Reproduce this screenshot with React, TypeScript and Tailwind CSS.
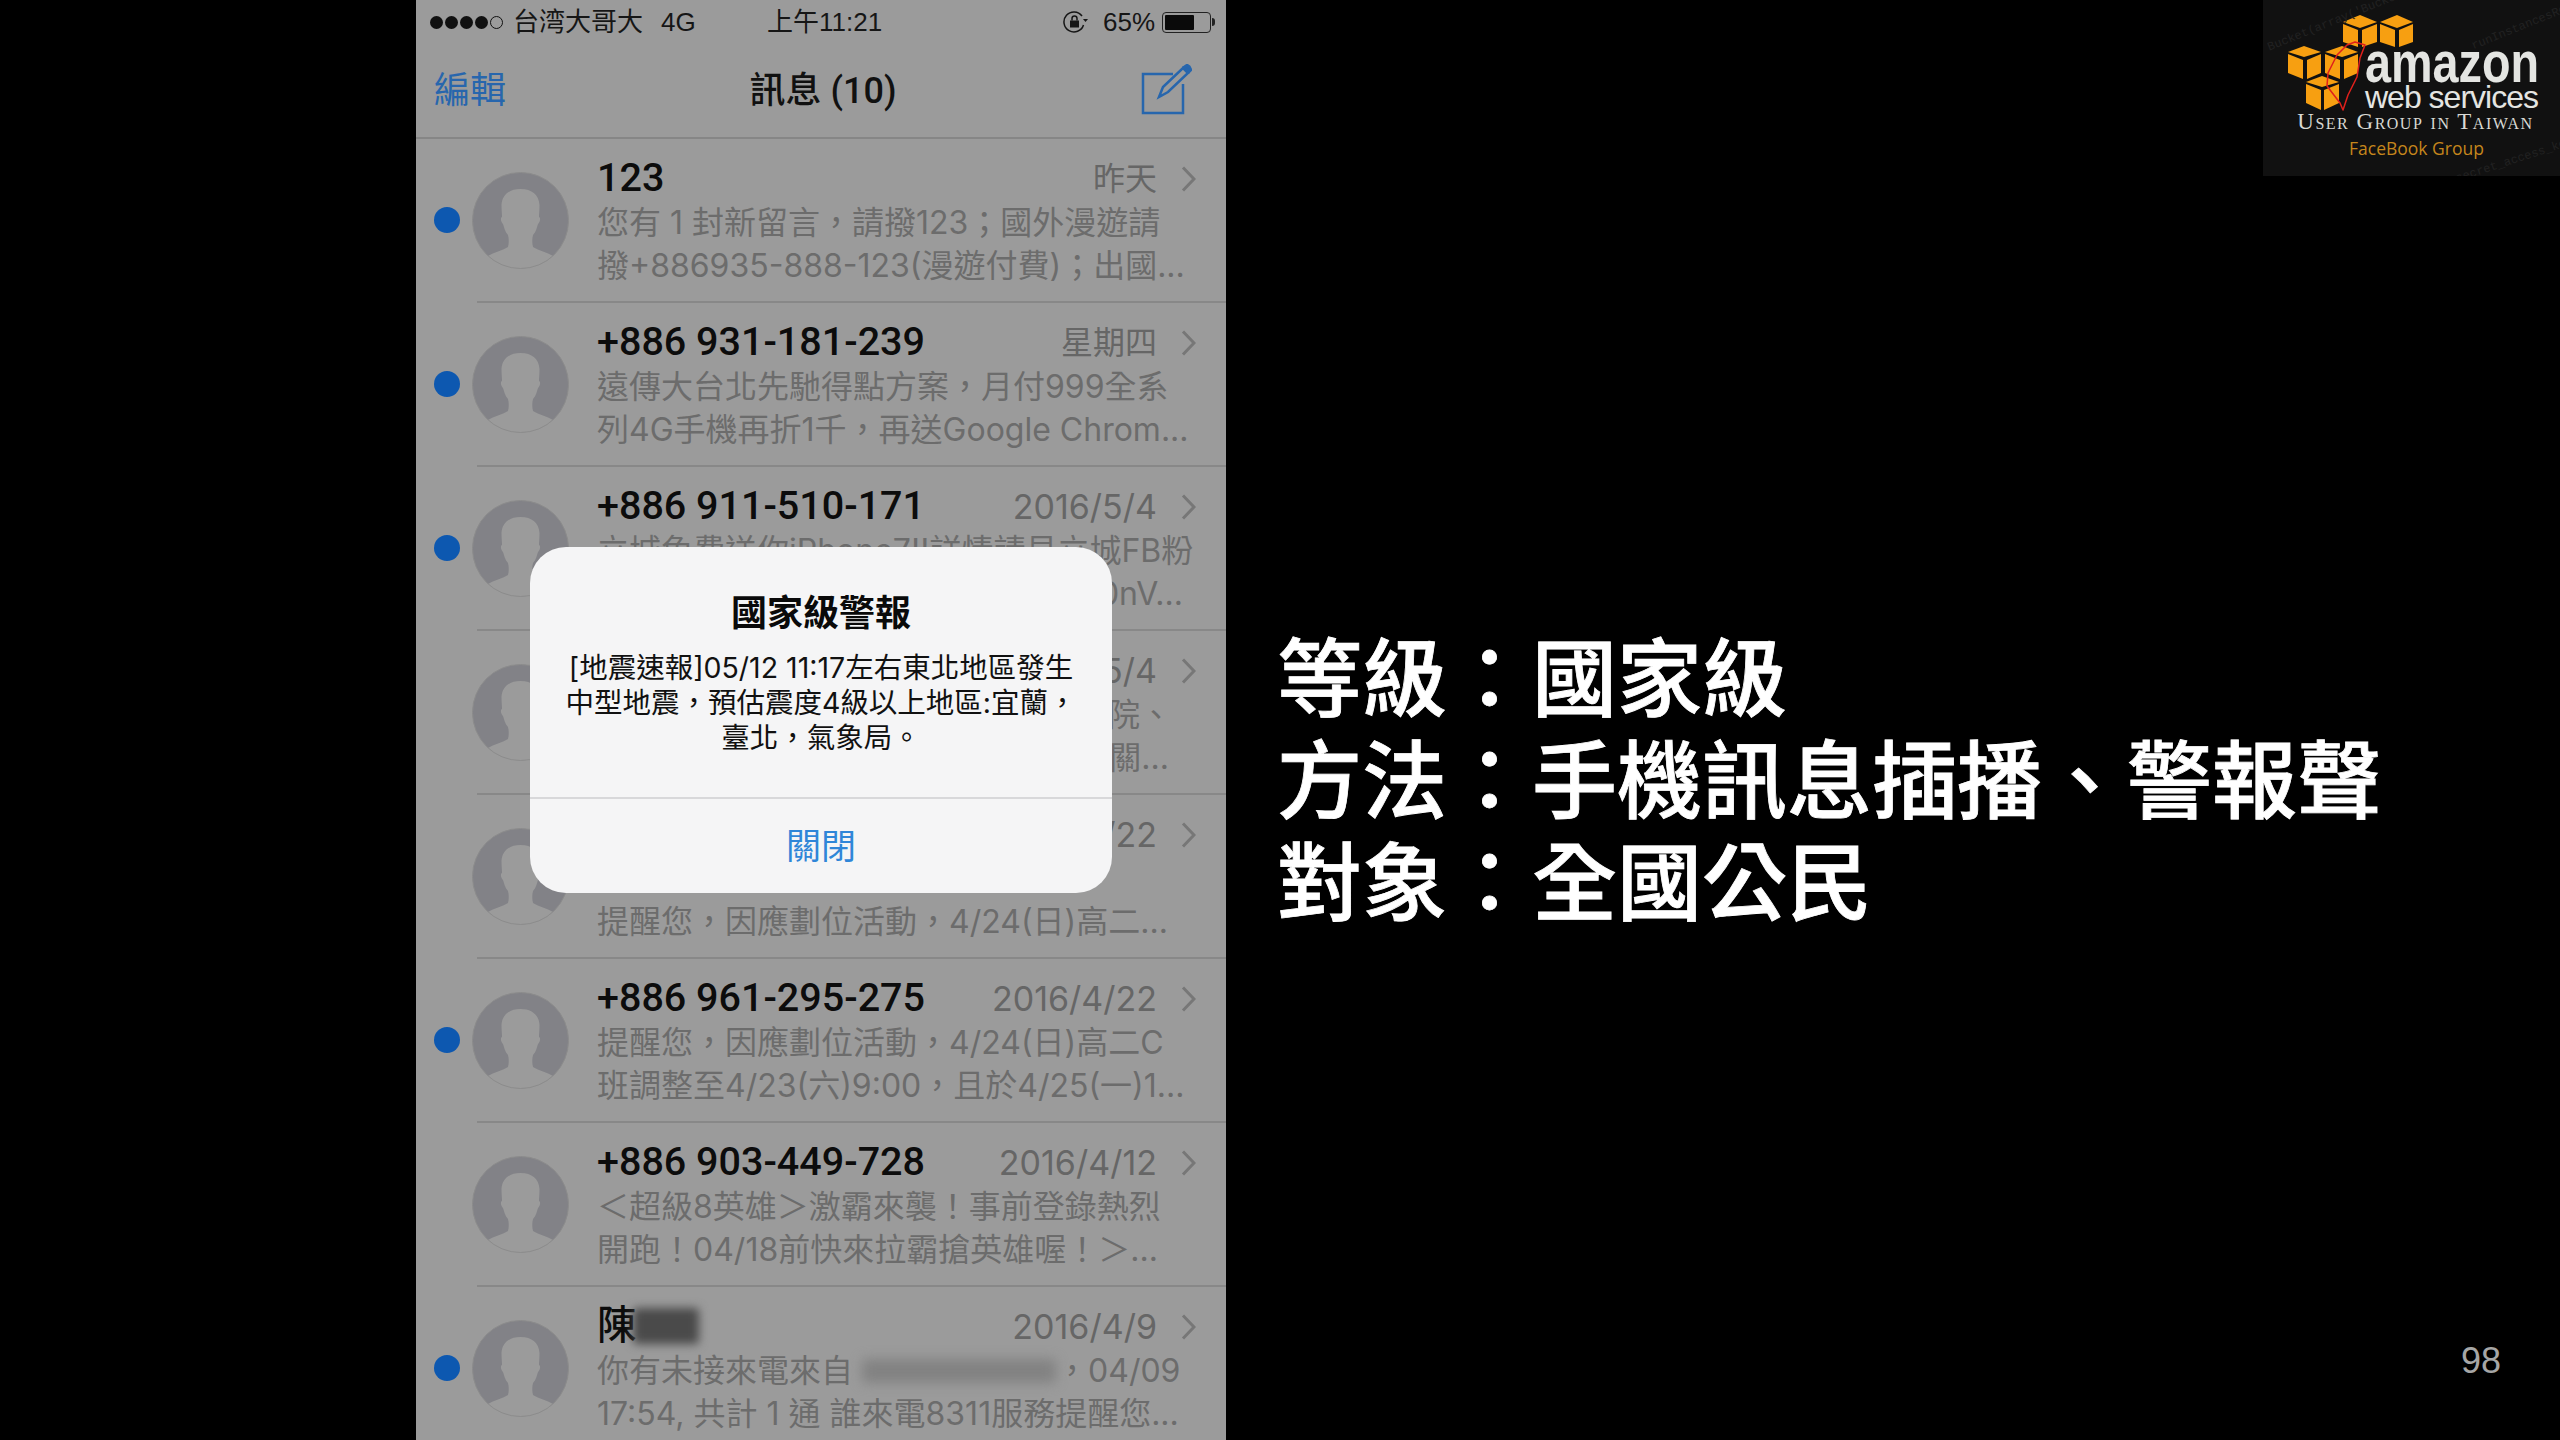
const font = "font-['Liberation_Sans','Noto_Sans_CJK_TC',sans-serif]";

type Line = { text: string; cls?: string };
type Msg = { name: string; date: string; unread: boolean; lines: Line[]; blurName?: boolean; blurPhone?: boolean };

const msgs: Msg[] = [
  { name: "123", date: "昨天", unread: true, lines: [{ text: "您有 1 封新留言\uFF0C請撥123\uFF1B國外漫遊請" }, { text: "撥+886935-888-123(漫遊付費)\uFF1B出國..." }] },
  { name: "+886 931-181-239", date: "星期四", unread: true, lines: [{ text: "遠傳大台北先馳得點方案\uFF0C月付999全系" }, { text: "列4G手機再折1千\uFF0C再送Google Chrom..." }] },
  { name: "+886 911-510-171", date: "2016/5/4", unread: true, lines: [{ text: "立城免費送你iPhone7!!詳情請見立城FB粉" }, { text: "0nV...", cls: "justify-end pr-[43px]" }] },
  { name: "", date: "2016/5/4", unread: false, lines: [{ text: "院\u3001", cls: "justify-end pr-[54px]" }, { text: "關...", cls: "justify-end pr-[57px]" }] },
  { name: "", date: "2016/4/22", unread: false, lines: [{ text: "" }, { text: "提醒您\uFF0C因應劃位活動\uFF0C4/24(日)高二..." }] },
  { name: "+886 961-295-275", date: "2016/4/22", unread: true, lines: [{ text: "提醒您\uFF0C因應劃位活動\uFF0C4/24(日)高二C" }, { text: "班調整至4/23(六)9:00\uFF0C且於4/25(一)1..." }] },
  { name: "+886 903-449-728", date: "2016/4/12", unread: false, lines: [{ text: "\uFF1C超級8英雄\uFF1E激霸來襲\uFF01事前登錄熱烈" }, { text: "開跑\uFF0104/18前快來拉霸搶英雄喔\uFF01\uFF1E..." }] },
  { name: "陳", date: "2016/4/9", unread: true, blurName: true, blurPhone: true, lines: [{ text: "你有未接來電來自" }, { text: "17:54, 共計 1 通 誰來電8311服務提醒您..." }] },
];

function Avatar() {
  return (
    <svg width="97" height="97" viewBox="0 0 97 97" className="shrink-0">
      <circle cx="48.5" cy="48.5" r="48" fill="#828287" />
      <path
        d="M48.5 17C37 17 30 23 29.500 33C29.500 38 30 42 30 45C28 46 29 50 31 52C32 55 33 60 36 63C37 67 37 71 36 75C30 79 22 80 16 84C24 92 36 96.500 48.5 96.500C61 96.500 73 92 81 84C75 80 67 79 61 75C60 71 60 67 61 63C64 60 65 55 66 52C68 50 69 46 67 45C67 42 67.500 38 67.500 33C67 23 60 17 48.5 17Z"
        fill="#9b9b9b"
      />
      <circle cx="48.5" cy="48.5" r="48" fill="none" stroke="#8c8c8c" strokeWidth="1" />
    </svg>
  );
}

function Chevron() {
  return (
    <svg width="15" height="26" viewBox="0 0 15 26" fill="none" stroke="#777" strokeWidth="3" className="mt-[2px]">
      <path d="M2 1.500 13 13 2 24.500" />
    </svg>
  );
}

function Row({ m }: { m: Msg }) {
  const dateSize = m.date.startsWith("2") ? "text-[34px]" : "text-[32px]";
  return (
    <div className="flex h-[162px] shrink-0 items-center">
      <div className="flex w-[56px] shrink-0 justify-end pr-[12px]">
        {m.unread ? <div className="h-[26px] w-[26px] rounded-full bg-[#0d58b0]" /> : null}
      </div>
      <Avatar />
      <div className="ml-[28px] flex h-full min-w-0 flex-1 flex-col pt-[17px]">
        <div className="flex h-[44px] items-center pr-[30px]">
          <div className="flex flex-1 items-center text-[39.500px] font-medium text-[#0c0c0c] font-['Roboto','Noto_Sans_CJK_TC',sans-serif]">
            {m.name}
            {m.blurName ? <span className="ml-[-4px] h-[36px] w-[66px] rounded bg-[#4a4a4a] blur-[5px]" /> : null}
          </div>
          <div className={"mr-[24px] mt-[2px] leading-none text-[#666] font-['Inter','Noto_Sans_CJK_TC',sans-serif] " + dateSize}>{m.date}</div>
          <Chevron />
        </div>
        <div className="mt-[1px] text-[32px] leading-[43px] text-[#6c6c6c] font-['Inter','Noto_Sans_CJK_TC',sans-serif]">
          {m.lines.map((l, i) => (
            <div key={i} className={"flex h-[43px] items-center whitespace-pre " + (l.cls ?? "")}>
              {l.text}
              {m.blurPhone && i === 0 ? (
                <>
                  <span className="ml-[9px] h-[24px] w-[194px] rounded bg-[#828282] blur-[6px]" />
                  <span>{"\uFF0C04/09"}</span>
                </>
              ) : null}
            </div>
          ))}
        </div>
      </div>
    </div>
  );
}

function Phone() {
  return (
    <div className="flex h-[1440px] w-[810px] shrink-0 flex-col overflow-hidden bg-[#9b9b9b]">
      <div className="flex h-[44px] shrink-0 items-center whitespace-nowrap text-[26px] text-[#161616]">
        <div className="ml-[14px] flex w-[73px] items-center gap-[2px]">
          <span className="h-[13px] w-[13px] rounded-full bg-[#111]" />
          <span className="h-[13px] w-[13px] rounded-full bg-[#111]" />
          <span className="h-[13px] w-[13px] rounded-full bg-[#111]" />
          <span className="h-[13px] w-[13px] rounded-full bg-[#111]" />
          <span className="h-[13px] w-[13px] rounded-full border border-[#111]" />
        </div>
        <span className="ml-[10px] w-[130px]">台湾大哥大</span>
        <span className="ml-[18px] w-[35px]">4G</span>
        <span className="ml-[71px] w-[117px]">上午11:21</span>
        <svg width="25" height="24" viewBox="0 0 25 24" fill="none" stroke="#161616" strokeWidth="1.500" className="ml-[179px] shrink-0">
          <path d="M19 6a10 10 0 1 0 1.500 9" />
          <path d="m20 9 2.500 3 2.500-3z" fill="#161616" stroke="none" />
          <rect x="7" y="10.500" width="9" height="7" fill="#161616" stroke="none" />
          <path d="M9 10.500V8.500a2.500 2.500 0 0 1 5 0v2" />
        </svg>
        <span className="ml-[15px] w-[52px]">65%</span>
        <div className="ml-[7px] flex h-[21px] w-[49px] shrink-0 items-center rounded-[4px] border border-[#222] p-[2px]">
          <div className="h-full w-[29px] rounded-[1px] bg-[#0a0a0a]" />
        </div>
        <div className="ml-[1px] h-[8px] w-[3px] rounded-r bg-[#222]" />
      </div>
      <div className="flex h-[93px] shrink-0 items-center justify-between pl-[18px] pr-[34px]">
        <span className="text-[36px] leading-none text-[#2766ad]">編輯</span>
        <span className="text-[36px] font-medium leading-none text-[#111] font-['Roboto','Noto_Sans_CJK_TC',sans-serif]">訊息 (10)</span>
        <svg width="52" height="52" viewBox="0 0 52 52" fill="none" stroke="#2766ad" strokeWidth="2.500" className="mb-[2px]">
          <path d="M33 10H3v39h40V20" />
          <path d="M19 33l4-10L43 4l5 5-20 19z" />
          <path d="m44 3 3-2q3 1 4 5l-2 2z" fill="#2766ad" />
        </svg>
      </div>
      <div className="h-[2px] shrink-0 bg-[#868686]" />
      {msgs.map((m, i) => (
        <div key={i} className="shrink-0">
          <Row m={m} />
          <div className="ml-[61px] h-[2px] bg-[#888]" />
        </div>
      ))}
    </div>
  );
}

function Alert() {
  return (
    <div className="absolute left-[530px] top-[547px] flex h-[346px] w-[582px] flex-col rounded-[36px] bg-[#f5f5f6] text-center">
      <div className="h-[252px] border-b-2 border-[#d8d8da] pt-[44px]">
        <div className="text-[36px] font-bold leading-[46px] text-[#0a0a0a]">國家級警報</div>
        <div className="mt-[13px] text-[28.500px] leading-[35px] text-[#111] font-['Inter','Noto_Sans_CJK_TC',sans-serif]">
          <div>[地震速報]05/12 11:17左右東北地區發生</div>
          <div>{"中型地震\uFF0C預估震度4級以上地區:宜蘭\uFF0C"}</div>
          <div>{"臺北\uFF0C氣象局\u3002"}</div>
        </div>
      </div>
      <div className="flex flex-1 items-center justify-center pt-[2px] text-[35px] text-[#2f86d8]">關閉</div>
    </div>
  );
}

function Logo() {
  return (
    <div className="relative h-[176px] w-[297px] overflow-hidden bg-[#111]">
      <svg width="297" height="176" viewBox="0 0 297 176" className="absolute left-0 top-0">
        <g fill="#f79f11">
          <path d="M80 22 97 15 114 22 97 28z" />
          <path d="M80 24 95 30V47L80 42z" /><path d="M99 30 114 24V42L99 47z" />
          <path d="M117 22 134 15 150 22 134 28z" />
          <path d="M117 24 132 30V47L117 42z" /><path d="M136 30 150 24V42L136 47z" />
          <path d="M25 52 41 46 58 52 41 57z" />
          <path d="M25 54 40 60V79L25 73z" /><path d="M44 60 58 54V73L44 79z" />
          <path d="M62 52 79 46 95 52 79 57z" />
          <path d="M62 54 77 60V79L62 73z" /><path d="M81 60 95 54V73L81 79z" />
          <path d="M43 82 59 76 76 82 59 87z" />
          <path d="M43 84 58 90V110L43 103z" /><path d="M61 90 76 84V103L61 110z" />
        </g>
        <path d="M92 42 102 45 97 58 94 77 85 95 80 110 77 103 64 86 65 73 74 55 84 45z" fill="none" stroke="#e0201c" strokeWidth="1.500" strokeLinejoin="round" />
      </svg>
      <span className="absolute left-[0px] top-[12px] -rotate-[22deg] whitespace-nowrap text-[12px] text-[#222] font-['Liberation_Mono',monospace]">Bucket(array('Bucket</span>
      <span className="absolute left-[205px] top-[16px] -rotate-[22deg] whitespace-nowrap text-[12px] text-[#222] font-['Liberation_Mono',monospace]">runInstancesRequ</span>
      <span className="absolute left-[190px] top-[150px] -rotate-[18deg] whitespace-nowrap text-[12px] text-[#222] font-['Liberation_Mono',monospace]">secret_access_key:</span>
      <div className="absolute left-[102px] top-[34px] origin-left scale-x-[.82] text-[57px] font-bold leading-none text-[#e4e5e2] font-['Liberation_Sans',sans-serif]">amazon</div>
      <div className="absolute left-[102px] top-[81px] whitespace-nowrap text-[32px] leading-none tracking-[-1px] text-[#e4e5e2] font-['Liberation_Sans',sans-serif]">web services</div>
      <div className="absolute left-0 top-[110px] w-full whitespace-nowrap pl-[8px] text-center text-[23px] leading-none tracking-[1.500px] text-[#d9d9d4] [font-variant:small-caps] font-['Liberation_Serif',serif]">User Group in Taiwan</div>
      <div className="absolute left-0 top-[140px] w-full pl-[10px] text-center text-[17.500px] leading-none text-[#c5861c] font-['Open_Sans',sans-serif]">FaceBook Group</div>
    </div>
  );
}

export default function App() {
  return (
    <div className={"relative flex h-[1440px] w-[2560px] overflow-hidden bg-black " + font}>
      <div className="ml-[416px]">
        <Phone />
      </div>
      <Alert />
      <div className="flex flex-1 flex-col">
        <div className="flex justify-end">
          <Logo />
        </div>
        <div className="ml-[51px] mt-[454px] whitespace-nowrap text-[85px] font-medium leading-[102px] text-white [-webkit-text-stroke:0.8px_white]">
          <div>{"等級\uFF1A國家級"}</div>
          <div>{"方法\uFF1A手機訊息插播\u3001警報聲"}</div>
          <div>{"對象\uFF1A全國公民"}</div>
        </div>
        <div className="ml-auto mr-[59px] mt-auto mb-[61px] text-[36px] leading-none text-[#a6a6a6]">98</div>
      </div>
    </div>
  );
}
